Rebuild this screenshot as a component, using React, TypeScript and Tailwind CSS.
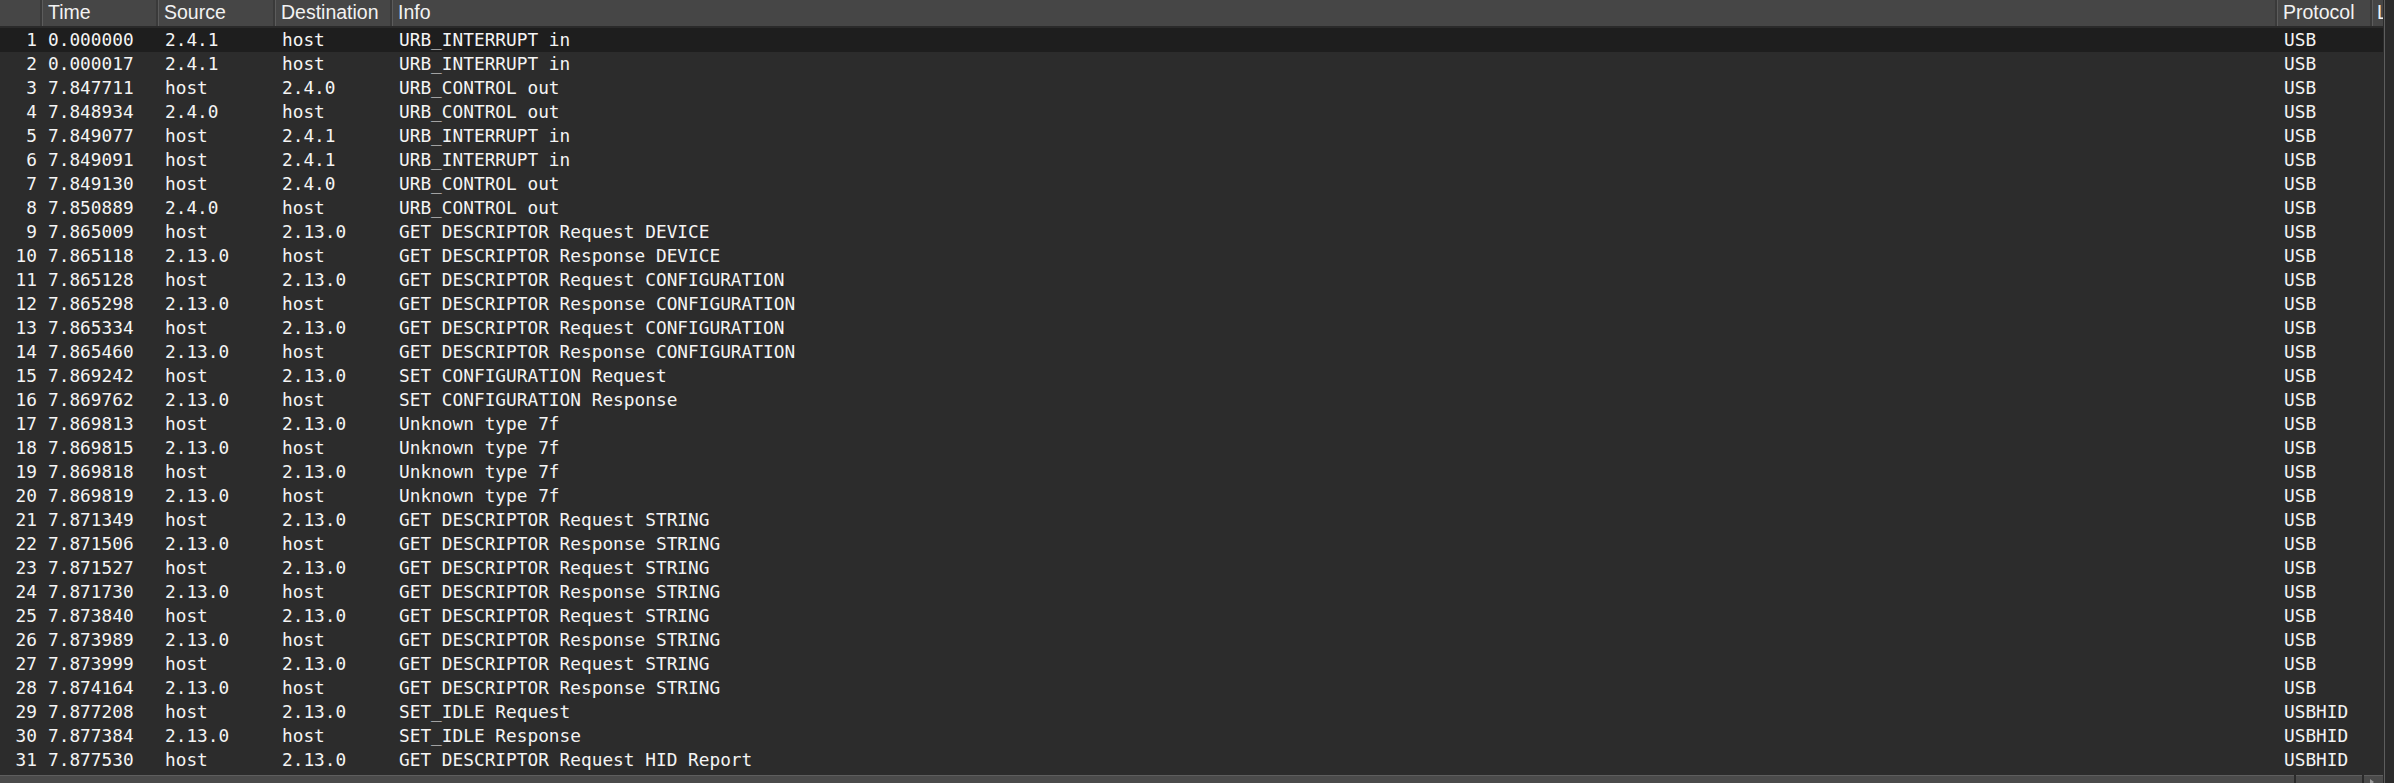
import React from "react";

type Row = [string, string, string, string, string, string];

const rows: Row[] = [
  ["1", "0.000000", "2.4.1", "host", "URB_INTERRUPT in", "USB"],
  ["2", "0.000017", "2.4.1", "host", "URB_INTERRUPT in", "USB"],
  ["3", "7.847711", "host", "2.4.0", "URB_CONTROL out", "USB"],
  ["4", "7.848934", "2.4.0", "host", "URB_CONTROL out", "USB"],
  ["5", "7.849077", "host", "2.4.1", "URB_INTERRUPT in", "USB"],
  ["6", "7.849091", "host", "2.4.1", "URB_INTERRUPT in", "USB"],
  ["7", "7.849130", "host", "2.4.0", "URB_CONTROL out", "USB"],
  ["8", "7.850889", "2.4.0", "host", "URB_CONTROL out", "USB"],
  ["9", "7.865009", "host", "2.13.0", "GET DESCRIPTOR Request DEVICE", "USB"],
  ["10", "7.865118", "2.13.0", "host", "GET DESCRIPTOR Response DEVICE", "USB"],
  ["11", "7.865128", "host", "2.13.0", "GET DESCRIPTOR Request CONFIGURATION", "USB"],
  ["12", "7.865298", "2.13.0", "host", "GET DESCRIPTOR Response CONFIGURATION", "USB"],
  ["13", "7.865334", "host", "2.13.0", "GET DESCRIPTOR Request CONFIGURATION", "USB"],
  ["14", "7.865460", "2.13.0", "host", "GET DESCRIPTOR Response CONFIGURATION", "USB"],
  ["15", "7.869242", "host", "2.13.0", "SET CONFIGURATION Request", "USB"],
  ["16", "7.869762", "2.13.0", "host", "SET CONFIGURATION Response", "USB"],
  ["17", "7.869813", "host", "2.13.0", "Unknown type 7f", "USB"],
  ["18", "7.869815", "2.13.0", "host", "Unknown type 7f", "USB"],
  ["19", "7.869818", "host", "2.13.0", "Unknown type 7f", "USB"],
  ["20", "7.869819", "2.13.0", "host", "Unknown type 7f", "USB"],
  ["21", "7.871349", "host", "2.13.0", "GET DESCRIPTOR Request STRING", "USB"],
  ["22", "7.871506", "2.13.0", "host", "GET DESCRIPTOR Response STRING", "USB"],
  ["23", "7.871527", "host", "2.13.0", "GET DESCRIPTOR Request STRING", "USB"],
  ["24", "7.871730", "2.13.0", "host", "GET DESCRIPTOR Response STRING", "USB"],
  ["25", "7.873840", "host", "2.13.0", "GET DESCRIPTOR Request STRING", "USB"],
  ["26", "7.873989", "2.13.0", "host", "GET DESCRIPTOR Response STRING", "USB"],
  ["27", "7.873999", "host", "2.13.0", "GET DESCRIPTOR Request STRING", "USB"],
  ["28", "7.874164", "2.13.0", "host", "GET DESCRIPTOR Response STRING", "USB"],
  ["29", "7.877208", "host", "2.13.0", "SET_IDLE Request", "USBHID"],
  ["30", "7.877384", "2.13.0", "host", "SET_IDLE Response", "USBHID"],
  ["31", "7.877530", "host", "2.13.0", "GET DESCRIPTOR Request HID Report", "USBHID"],
];

const mono = { fontFamily: '"DejaVu Sans Mono", "Liberation Mono", monospace' };
const sans = { fontFamily: '"Liberation Sans", Arial, sans-serif' };

function HeaderCell({ w, label, grow }: { w?: string; label: string; grow?: boolean }) {
  return (
    <div
      className={`${grow ? "flex-1" : w} h-full flex items-center pl-[5px] border-r border-r-[#5c5c5c] shadow-[inset_-2px_0_0_#3a3a3a] overflow-hidden whitespace-nowrap`}
    >
      {label}
    </div>
  );
}

export default function App() {
  return (
    <div className="w-[2394px] h-[783px] overflow-hidden bg-[#2b2b2b] flex text-[#f4f4f4]">
      <div className="w-[2383px] h-full flex flex-col bg-[#2c2c2c]">
        {/* header */}
        <div
          className="h-[28px] shrink-0 flex bg-[#464646] border-b-2 border-b-[#2a2a2a] text-[19.5px] text-[#f2f2f2]"
          style={sans}
        >
          <HeaderCell w="w-[43px]" label="" />
          <HeaderCell w="w-[116px]" label="Time" />
          <HeaderCell w="w-[117px]" label="Source" />
          <HeaderCell w="w-[117px]" label="Destination" />
          <HeaderCell grow label="Info" />
          <HeaderCell w="w-[95px]" label="Protocol" />
          <div className="w-[10px] h-full flex items-center pl-[4px] overflow-hidden">L</div>
        </div>
        {/* rows */}
        <div className="flex-1 flex flex-col text-[17.8px] leading-[24px]" style={mono}>
          {rows.map((r, i) => (
            <div
              key={r[0]}
              className={`h-[24px] flex whitespace-nowrap ${i === 0 ? "bg-[#1e1e1e]" : ""}`}
            >
              <div className="w-[43px] text-right pr-[6px]">{r[0]}</div>
              <div className="w-[116px] pl-[5px]">{r[1]}</div>
              <div className="w-[117px] pl-[6px]">{r[2]}</div>
              <div className="w-[117px] pl-[6px]">{r[3]}</div>
              <div className="flex-1 pl-[6px]">{r[4]}</div>
              <div className="w-[105px] pl-[6px]">{r[5]}</div>
            </div>
          ))}
        </div>
        {/* bottom bar */}
        <div className="h-[8px] shrink-0 flex bg-[#2a2a2a] gap-[2px]">
          <div className="w-[2294px] h-full bg-[#4b4b4b] border-t border-t-[#5e5e5e]" />
          <div className="w-[66px] h-full bg-[#4b4b4b] border-t border-t-[#5e5e5e]" />
          <div className="flex-1 h-full bg-[#4b4b4b] border-t border-t-[#5e5e5e] relative">
            <div className="absolute left-[6px] top-[3px] w-0 h-0 border-l-[4px] border-l-[#9a9a9a] border-y-[3px] border-y-transparent" />
          </div>
        </div>
      </div>
      <div className="w-[11px] h-full bg-[#2b2b2b] pl-[1px]">
        <div className="w-[1px] h-full bg-[#5e5e5e]" />
      </div>
    </div>
  );
}
